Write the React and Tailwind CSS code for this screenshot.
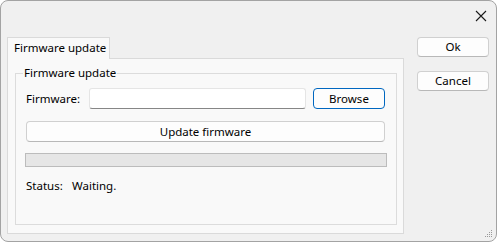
export default function App() {
  const font = { fontFamily: '"Segoe UI", "Noto Sans", "Liberation Sans", sans-serif' };
  return (
    <div className="w-[497px] h-[242px] overflow-hidden bg-white">
      <div
        className="relative w-[497px] h-[242px] box-border border border-[#a3a3a3] rounded-[8px] bg-[#f0f0f0] text-[11.5px] text-black flex flex-col whitespace-nowrap"
        style={font}
      >
        {/* title bar */}
        <div className="h-[36px] flex justify-end items-start">
          <div className="w-[46px] h-[30px] flex items-center justify-center mr-[-8px]">
            <svg width="12" height="12" viewBox="0 0 12 12">
              <path d="M1 1 L11 11 M11 1 L1 11" stroke="#1a1a1a" strokeWidth="1.1" fill="none" />
            </svg>
          </div>
        </div>
        <div className="flex items-start pl-[6px]">
          {/* tab widget */}
          <div className="w-[397px] flex flex-col">
            <div className="flex">
              <div className="relative z-10 h-[22px] w-[103px] box-border border border-b-0 border-[#dadada] bg-[#f9f9f9] pl-[6px] leading-[20px] mb-[-1px] whitespace-nowrap">
                Firmware update
              </div>
            </div>
            <div className="h-[176px] box-border border border-[#dadada] bg-[#f9f9f9] pt-[14px] pl-[7px] pr-[6px] pb-[8px]">
              <div className="relative h-[152px] box-border border border-[#dcdcdc] pl-[10px] pr-[10px] pt-[14px]">
                <div className="absolute left-[7px] top-[-10px] px-[1px] bg-[#f9f9f9] leading-[17px]">
                  Firmware update
                </div>
                <div className="flex items-center h-[21px]">
                  <div className="w-[63px]">Firmware:</div>
                  <div className="w-[217px] h-[21px] box-border bg-white border border-[#e5e5e5] border-b-[#868686] rounded-[3px]" />
                  <div className="ml-[7px] w-[72px] h-[21px] box-border border border-[#0067c0] rounded-[4px] bg-[#fdfdfd] flex items-center justify-center">
                    Browse
                  </div>
                </div>
                <div className="mt-[12px] h-[21px] w-[359px] box-border border border-[#d0d0d0] border-b-[#b8b8b8] rounded-[4px] bg-[#fdfdfd] flex items-center justify-center">
                  Update firmware
                </div>
                <div className="mt-[11px] h-[14px] w-[362px] ml-[-1px] box-border border border-[#bcbcbc] bg-[#e6e6e6]" />
                <div className="mt-[11px] flex leading-[16px]">
                  <div className="w-[46px]">Status:</div>
                  <div>Waiting.</div>
                </div>
              </div>
            </div>
          </div>
          {/* buttons */}
          <div className="ml-[13px] flex flex-col gap-[14px]">
            <div className="w-[72px] h-[20px] box-border border border-[#d0d0d0] border-b-[#b8b8b8] rounded-[4px] bg-[#fdfdfd] flex items-center justify-center">
              Ok
            </div>
            <div className="w-[72px] h-[20px] box-border border border-[#d0d0d0] border-b-[#b8b8b8] rounded-[4px] bg-[#fdfdfd] flex items-center justify-center">
              Cancel
            </div>
          </div>
        </div>
        {/* size grip */}
        <svg className="absolute right-[3px] bottom-[3px]" width="8" height="8" viewBox="0 0 8 8">
          <rect x="6" y="0" width="1" height="1" fill="#999" />
          <rect x="4" y="2" width="1" height="1" fill="#999" />
          <rect x="6" y="2" width="1" height="1" fill="#999" />
          <rect x="2" y="4" width="1" height="1" fill="#999" />
          <rect x="4" y="4" width="1" height="1" fill="#999" />
          <rect x="6" y="4" width="1" height="1" fill="#999" />
          <rect x="0" y="6" width="1" height="1" fill="#999" />
          <rect x="2" y="6" width="1" height="1" fill="#999" />
          <rect x="4" y="6" width="1" height="1" fill="#999" />
          <rect x="6" y="6" width="1" height="1" fill="#999" />
        </svg>
      </div>
    </div>
  );
}
